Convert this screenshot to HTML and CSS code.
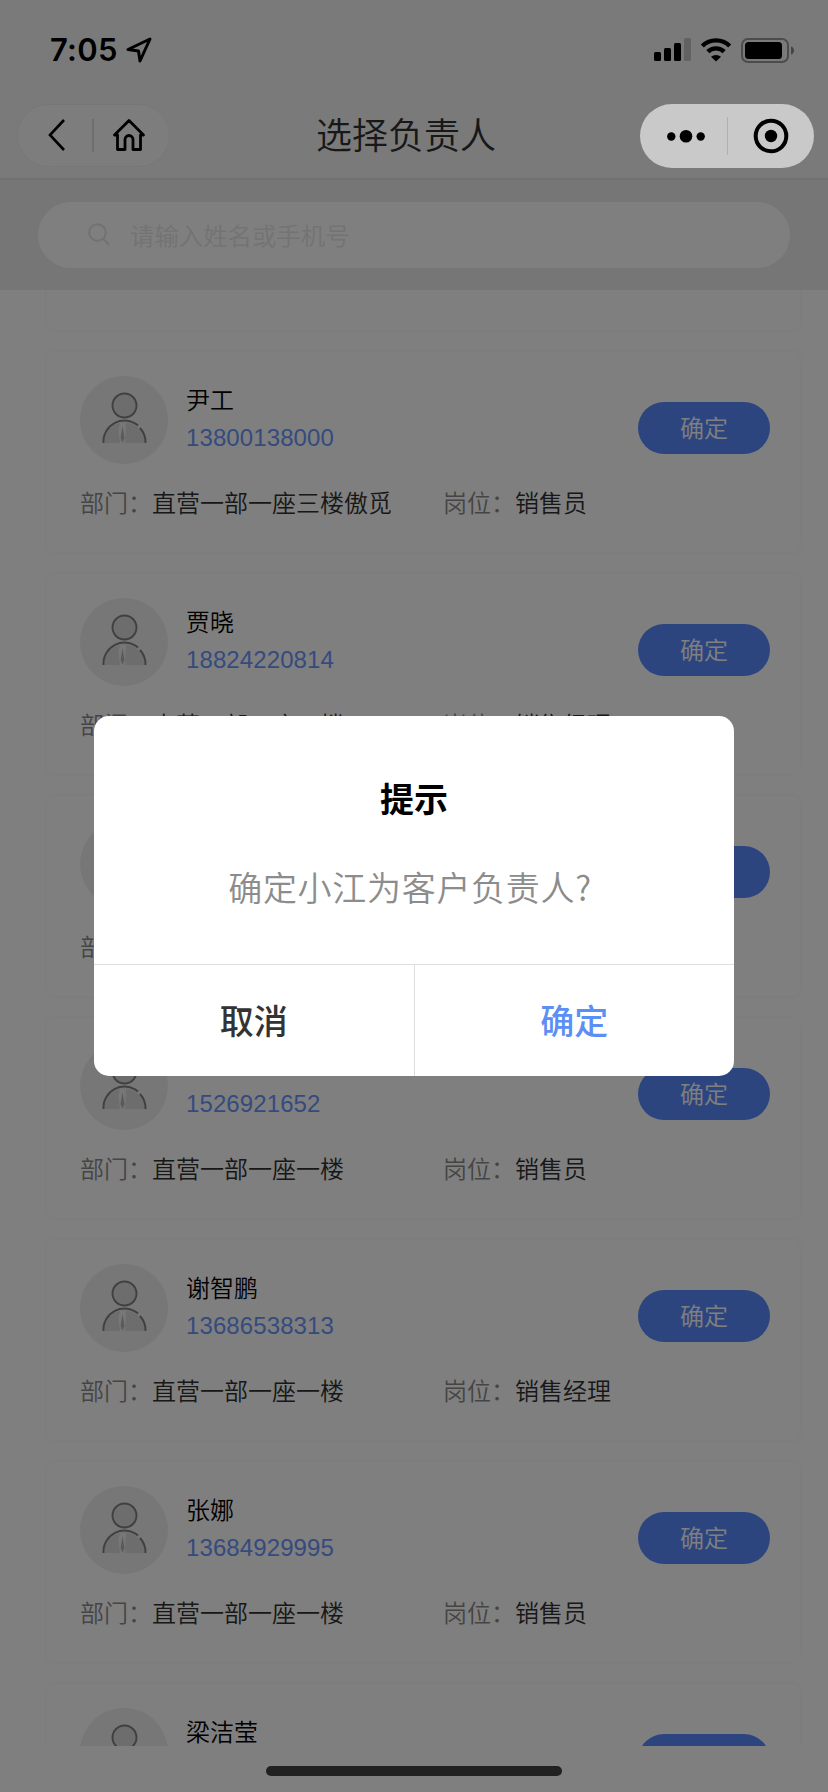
FILE: index.html
```html
<!DOCTYPE html>
<html lang="zh-CN">
<head>
<meta charset="utf-8">
<title>选择负责人</title>
<link rel="stylesheet" href="styles.css">
</head>
<body>
<svg class="defs" width="0" height="0">
  <symbol id="avatar" viewBox="0 0 88 88">
    <circle cx="44" cy="44" r="44" fill="#eeeeee"/>
    <circle cx="44.500" cy="29.500" r="12" fill="#dadada" stroke="#808080" stroke-width="1.900"/>
    <path d="M24 67a20.500 20.500 0 0 1 41 0z" fill="#dadada"/>
    <path d="M40 47h6l-1 20h-5l-1.500-13z" fill="#efefef"/>
    <path d="M42.500 50l2 12-2 5-2-5z" fill="#b5b5b5"/>
    <path d="M23.500 67a21 21 0 0 1 34.500-17.500M60 52a21 21 0 0 1 5.500 15" fill="none" stroke="#808080" stroke-width="1.900"/>
  </symbol>
</svg>
<div class="screen">
  <header class="header">
    <div class="status">
      <span class="time">7:05</span>
      <svg class="location" width="26" height="26" viewBox="0 0 26 26"><path d="M24 2 2 12.500l10.500 1.500 1.500 10z" fill="none" stroke="#000" stroke-width="3" stroke-linejoin="round"/></svg>
      <div class="signals">
        <svg width="37" height="24" viewBox="0 0 37 24"><rect y="14" width="7" height="9" rx="1.500"/><rect x="10" y="10" width="7" height="13" rx="1.500"/><rect x="20" y="5" width="7" height="18" rx="1.500"/><rect x="30" width="7" height="23" rx="1.500" fill="#c4c4c4"/></svg>
        <svg width="32" height="24" viewBox="0 0 32 24"><path d="M2.300 8a19.500 19.500 0 0 1 27.400 0M7.800 13.600a11.800 11.800 0 0 1 16.400 0" fill="none" stroke="#000" stroke-width="4.300"/><path d="m16 23.500-5-4.700a7.500 7.500 0 0 1 10 0z"/></svg>
        <svg width="54" height="25" viewBox="0 0 54 25"><rect x="1" y="1" width="46" height="23" rx="6" fill="none" stroke="#999" stroke-width="2"/><rect x="4" y="4" width="37" height="17" rx="3.500"/><path d="M50 8.500c4 1 4 7 0 8z" fill="#888"/></svg>
      </div>
    </div>
    <nav class="navbar">
      <div class="nav-pill">
        <svg class="back" width="18" height="34" viewBox="0 0 18 34"><path d="M16 2 2 17l14 15" fill="none" stroke="#000" stroke-width="2.600"/></svg>
        <i class="pill-line"></i>
        <svg width="34" height="34" viewBox="0 0 34 34"><path d="M2.500 17 17 2.500 31.500 17H28.500v14.500H21V21.500a4 4 0 0 0-8 0v10H5.500V17z" fill="none" stroke="#000" stroke-width="2.800" stroke-linejoin="round"/></svg>
      </div>
      <h1 class="title">选择负责人</h1>
    </nav>
  </header>
  <div class="search-band">
    <div class="search">
      <svg width="22" height="23" viewBox="0 0 22 23"><circle cx="9.500" cy="9.500" r="8.300" fill="none" stroke="#e2e2e2" stroke-width="2"/><path d="m15.500 16 5.500 6" stroke="#e2e2e2" stroke-width="2"/></svg>
      <span>请输入姓名或手机号</span>
    </div>
  </div>
  <main class="list">
    <article class="card"></article>
    <article class="card">
      <div class="person"><svg class="avatar"><use href="#avatar"/></svg><div class="who"><b>尹工</b><span>13800138000</span></div><button class="choose">确定</button></div>
      <div class="facts"><p><label>部门：</label>直营一部一座三楼傲觅</p><p><label>岗位：</label>销售员</p></div>
    </article>
    <article class="card">
      <div class="person"><svg class="avatar"><use href="#avatar"/></svg><div class="who"><b>贾晓</b><span>18824220814</span></div><button class="choose">确定</button></div>
      <div class="facts"><p><label>部门：</label>直营一部一座一楼</p><p><label>岗位：</label>销售经理</p></div>
    </article>
    <article class="card">
      <div class="person"><svg class="avatar"><use href="#avatar"/></svg><div class="who"></div><button class="choose"></button></div>
      <div class="facts"><p><label>部门：</label></p></div>
    </article>
    <article class="card">
      <div class="person"><svg class="avatar"><use href="#avatar"/></svg><div class="who"><b></b><span>1526921652</span></div><button class="choose">确定</button></div>
      <div class="facts"><p><label>部门：</label>直营一部一座一楼</p><p><label>岗位：</label>销售员</p></div>
    </article>
    <article class="card">
      <div class="person"><svg class="avatar"><use href="#avatar"/></svg><div class="who"><b>谢智鹏</b><span>13686538313</span></div><button class="choose">确定</button></div>
      <div class="facts"><p><label>部门：</label>直营一部一座一楼</p><p><label>岗位：</label>销售经理</p></div>
    </article>
    <article class="card">
      <div class="person"><svg class="avatar"><use href="#avatar"/></svg><div class="who"><b>张娜</b><span>13684929995</span></div><button class="choose">确定</button></div>
      <div class="facts"><p><label>部门：</label>直营一部一座一楼</p><p><label>岗位：</label>销售员</p></div>
    </article>
    <article class="card">
      <div class="person"><svg class="avatar"><use href="#avatar"/></svg><div class="who"><b>梁洁莹</b></div><button class="choose"></button></div>
    </article>
  </main>
</div>
<div class="mask">
  <section class="dialog">
    <div class="dialog-body"><h2>提示</h2><p>确定小江为客户负责人?</p></div>
    <div class="actions"><button>取消</button><button class="primary">确定</button></div>
  </section>
</div>
<div class="capsule">
  <svg width="174" height="64" viewBox="0 0 174 64"><circle cx="31.300" cy="32.500" r="4.200"/><circle cx="46" cy="32.300" r="6.300"/><circle cx="60.700" cy="32.500" r="4.200"/><path d="M87.500 13v38" stroke="#b0b0b0"/><circle cx="131" cy="32" r="15.300" fill="none" stroke="#000" stroke-width="4"/><circle cx="131" cy="32" r="6.200"/></svg>
</div>
<div class="home-bar"></div>
</body>
</html>
```
FILE: styles.css
```css
* { box-sizing: border-box; margin: 0; padding: 0; }
body {
  position: relative;
  width: 828px;
  height: 1792px;
  overflow: hidden;
  background: #fff;
  font-family: "Noto Sans CJK SC", sans-serif;
}
svg { display: block; flex: none; }
button { border: 0; background: none; font-family: inherit; }
.defs { position: absolute; }
.screen { display: flex; flex-direction: column; height: 1746px; overflow: hidden; }

.header { flex: none; height: 180px; background: #f4f4f4; border-bottom: 2px solid #e2e2e2; }
.status { display: flex; align-items: center; height: 100px; padding: 0 33px 0 50px; }
.time { width: 76px; font: 600 31px/36px Inter, sans-serif; letter-spacing: .3px; }
.signals { display: flex; gap: 9px; margin-left: auto; }
.navbar { display: flex; align-items: center; height: 70px; padding-left: 17px; }
.nav-pill {
  display: flex;
  flex: none;
  align-items: center;
  width: 153px;
  height: 63px;
  padding-left: 30px;
  border: 1px solid #efefef;
  border-radius: 32px;
  background: #fbfbfb;
}
.pill-line { flex: none; width: 2px; height: 33px; margin: 0 18px 0 26px; background: #dcdcdc; }
.title { margin-left: 146px; padding-bottom: 5px; font-size: 36px; line-height: 54px; font-weight: 350; color: #303030; }

.search-band { flex: none; height: 110px; padding: 22px 38px; background: #ececec; }
.search {
  display: flex;
  align-items: center;
  gap: 20px;
  height: 66px;
  padding: 0 0 2px 50px;
  border-radius: 33px;
  background: #fff;
  color: #e6e6e6;
  font-size: 24.4px;
  font-weight: 350;
}

.list { display: flex; flex-direction: column; gap: 22px; margin-top: -160px; padding: 0 28px 0 47px; }
.header, .search-band { position: relative; z-index: 1; }
.card {
  flex: none;
  height: 200px;
  padding: 24px 30px 0 33px;
  border-radius: 8px;
  background: #fff;
  box-shadow: 0 0 6px rgba(0, 0, 0, .05);
}
.person { display: flex; align-items: center; height: 88px; }
.avatar { width: 88px; height: 88px; }
.who { display: flex; flex-direction: column; height: 74px; margin-left: 18px; }
.who b { height: 30px; margin: 1px 0 5px; font-weight: 350; font-size: 24px; line-height: 30px; }
.who span { font: 24px/37px "Liberation Sans", sans-serif; letter-spacing: .1px; color: #6a96fb; }
.choose {
  width: 132px;
  height: 52px;
  margin: 16px 0 0 auto;
  border-radius: 26px;
  background: #588afe;
  color: #fff;
  font-size: 24px;
  font-weight: 350;
  line-height: 48px;
  padding-bottom: 2px;
}
.card:last-child .choose { margin-top: 16px; }
.facts { display: grid; grid-template-columns: 363px 1fr; margin-top: 21px; font-size: 24px; line-height: 34px; font-weight: 350; color: #303030; }
.facts label { color: #8a8a8a; }

.mask {
  position: absolute;
  z-index: 2;
  inset: 0;
  display: flex;
  align-items: center;
  justify-content: center;
  background: rgba(0, 0, 0, .5);
}
.dialog { width: 640px; height: 360px; border-radius: 15px; background: #fff; overflow: hidden; }
.dialog-body { height: 249px; padding-top: 57px; text-align: center; border-bottom: 1px solid #dedede; }
.dialog-body h2 { font-size: 34px; line-height: 50px; font-weight: 700; }
.dialog-body p { margin-top: 39px; padding-right: 8px; font-size: 34px; line-height: 50px; letter-spacing: .7px; font-weight: 350; color: #8c8c8c; }
.actions { display: flex; height: 111px; }
.actions button { flex: 1; padding-bottom: 3px; font-size: 34px; font-weight: 500; color: #333; }
.actions .primary { border-left: 1px solid #dedede; color: #5b8ff5; }

.capsule { position: absolute; z-index: 3; left: 640px; top: 104px; width: 174px; height: 64px; border-radius: 32px; background: #c9c9c9; }
.home-bar { position: absolute; z-index: 3; left: 266px; top: 1766px; width: 296px; height: 10px; border-radius: 5px; background: #212121; }
```
